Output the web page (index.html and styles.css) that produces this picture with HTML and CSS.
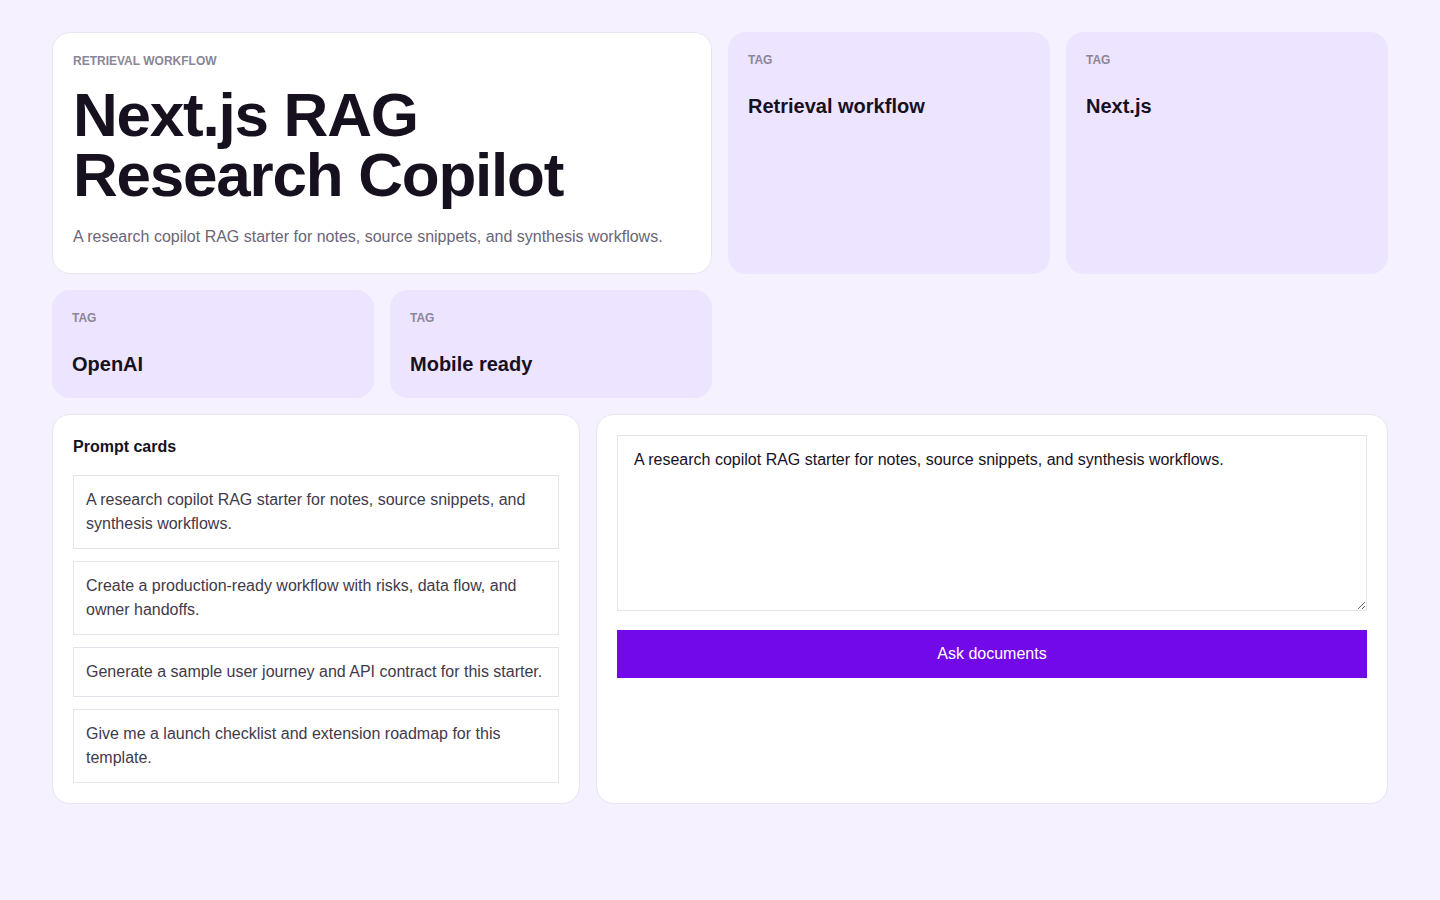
FILE: index.html
```html
<!DOCTYPE html>
<html lang="en">
<head>
<meta charset="utf-8">
<title>Next.js RAG Research Copilot</title>
<link rel="stylesheet" href="styles.css">
</head>
<body>
<main class="page">
  <section class="top-grid">
    <div class="hero card">
      <div class="eyebrow">RETRIEVAL WORKFLOW</div>
      <h1 class="hero-title">Next.js RAG<br>Research Copilot</h1>
      <p class="hero-desc">A research copilot RAG starter for notes, source snippets, and synthesis workflows.</p>
    </div>
    <div class="tag">
      <div class="tag-label">TAG</div>
      <div class="tag-title">Retrieval workflow</div>
    </div>
    <div class="tag">
      <div class="tag-label">TAG</div>
      <div class="tag-title">Next.js</div>
    </div>
    <div class="tag">
      <div class="tag-label">TAG</div>
      <div class="tag-title">OpenAI</div>
    </div>
    <div class="tag">
      <div class="tag-label">TAG</div>
      <div class="tag-title">Mobile ready</div>
    </div>
  </section>
  <section class="bottom-grid">
    <div class="panel prompts">
      <h2 class="panel-title">Prompt cards</h2>
      <div class="prompt-list">
        <div class="prompt">A research copilot RAG starter for notes, source snippets, and synthesis workflows.</div>
        <div class="prompt">Create a production-ready workflow with risks, data flow, and owner handoffs.</div>
        <div class="prompt">Generate a sample user journey and API contract for this starter.</div>
        <div class="prompt">Give me a launch checklist and extension roadmap for this template.</div>
      </div>
    </div>
    <div class="panel ask">
      <textarea class="ask-input">A research copilot RAG starter for notes, source snippets, and synthesis workflows.</textarea>
      <button class="ask-btn" type="button">Ask documents</button>
    </div>
  </section>
</main>
</body>
</html>
```

FILE: styles.css
```css
* { box-sizing: border-box; }

html, body {
  margin: 0;
  padding: 0;
  background: #f5f1fe;
}

body {
  font-family: "Liberation Sans", Arial, sans-serif;
  color: #17111f;
}

.page {
  padding: 32px 52px;
  display: flex;
  flex-direction: column;
  gap: 16px;
}

.top-grid {
  display: grid;
  grid-template-columns: repeat(4, 1fr);
  gap: 16px;
}

.card {
  background: #ffffff;
  border: 1px solid #e9e4f3;
  border-radius: 18px;
}

.hero {
  grid-column: span 2;
  padding: 20px 20px 24px;
}

.eyebrow {
  font-size: 12px;
  line-height: 16px;
  font-weight: 700;
  color: #8b8697;
}

.hero-title {
  margin: 16px 0 0;
  font-size: 62px;
  line-height: 60px;
  letter-spacing: -0.02em;
  font-weight: 700;
  color: #17111f;
}

.hero-desc {
  margin: 20px 0 0;
  font-size: 16px;
  line-height: 24px;
  color: #6b6578;
}

.tag {
  background: #ede4ff;
  border-radius: 18px;
  padding: 20px;
}

.tag-label {
  font-size: 12px;
  line-height: 16px;
  font-weight: 700;
  color: #8b8697;
}

.tag-title {
  margin-top: 24px;
  font-size: 20px;
  line-height: 28px;
  font-weight: 700;
  color: #17111f;
}

.bottom-grid {
  display: grid;
  grid-template-columns: 2fr 3fr;
  gap: 16px;
}

.panel {
  background: #ffffff;
  border: 1px solid #e9e4f3;
  border-radius: 18px;
  padding: 20px;
}

.panel-title {
  margin: 0 0 16px;
  font-size: 16px;
  line-height: 24px;
  font-weight: 700;
  color: #17111f;
}

.prompt-list {
  display: flex;
  flex-direction: column;
  gap: 12px;
}

.prompt {
  border: 1px solid #e6e4ea;
  padding: 12px;
  font-size: 16px;
  line-height: 24px;
  color: #3f3a4b;
}

.ask {
  display: flex;
  flex-direction: column;
  gap: 19px;
}

.ask-input {
  display: block;
  width: 100%;
  height: 176px;
  border: 1px solid #e6e4ea;
  border-radius: 0;
  padding: 15px 16px 13px;
  font-family: "Liberation Sans", Arial, sans-serif;
  font-size: 16px;
  line-height: normal;
  color: #17111f;
  background: #ffffff;
  resize: vertical;
  outline: none;
}

.ask-btn {
  display: block;
  width: 100%;
  height: 48px;
  border: none;
  border-radius: 0;
  background: #7209e8;
  color: #ffffff;
  font-family: "Liberation Sans", Arial, sans-serif;
  font-size: 16px;
  cursor: pointer;
}
```
